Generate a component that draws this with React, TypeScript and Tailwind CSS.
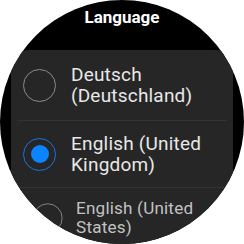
import React from 'react';

type Lang = { id: string; line1: string; line2: string };

const languages: Lang[] = [
  { id: 'de-DE', line1: 'Deutsch', line2: '(Deutschland)' },
  { id: 'en-GB', line1: 'English (United', line2: 'Kingdom)' },
  { id: 'en-US', line1: 'English (United', line2: 'States)' },
];

const Radio: React.FC<{ checked: boolean }> = ({ checked }) => (
  <div
    className={`w-[33px] h-[33px] shrink-0 rounded-full flex items-center justify-center border-[1.5px] ${
      checked ? 'border-[#1b74e0]' : 'border-[#8c8c8c]'
    }`}
  >
    {checked && <div className="w-[18px] h-[18px] rounded-full bg-[#0a84ff]" />}
  </div>
);

export default function App() {
  const selected = 'en-GB';

  return (
    <div className="w-[244px] h-[244px] bg-white" style={{ fontFamily: 'Roboto, "Liberation Sans", sans-serif' }}>
      <div className="w-[244px] h-[244px] rounded-full bg-black overflow-hidden">
        {/* Titel */}
        <div className="h-[34px] pt-[2px] flex items-center justify-center text-white text-[17px] font-bold">
          Language
        </div>

        {/* Liste */}
        <div className="mt-[16px] mx-[11px] h-[194px] bg-[#262626] rounded-t-[18px]">
          {languages.map((lang, i) => {
            const last = i === languages.length - 1;
            return (
              <div key={lang.id}>
                {i > 0 && <div className="mx-[6px] h-px bg-[#333333]" />}
                <div
                  className={`flex items-center gap-[15px] pl-[12px] ${
                    i === 0 ? 'h-[70px]' : 'h-[66px]'
                  } ${last ? 'scale-90 origin-top text-[#c2c2c2]' : 'text-[#e8e8e8]'}`}
                >
                  <Radio checked={lang.id === selected} />
                  <div className="text-[19px] leading-[21px] tracking-[0.2px]">
                    <div>{lang.line1}</div>
                    <div>{lang.line2}</div>
                  </div>
                </div>
              </div>
            );
          })}
        </div>
      </div>
    </div>
  );
}
